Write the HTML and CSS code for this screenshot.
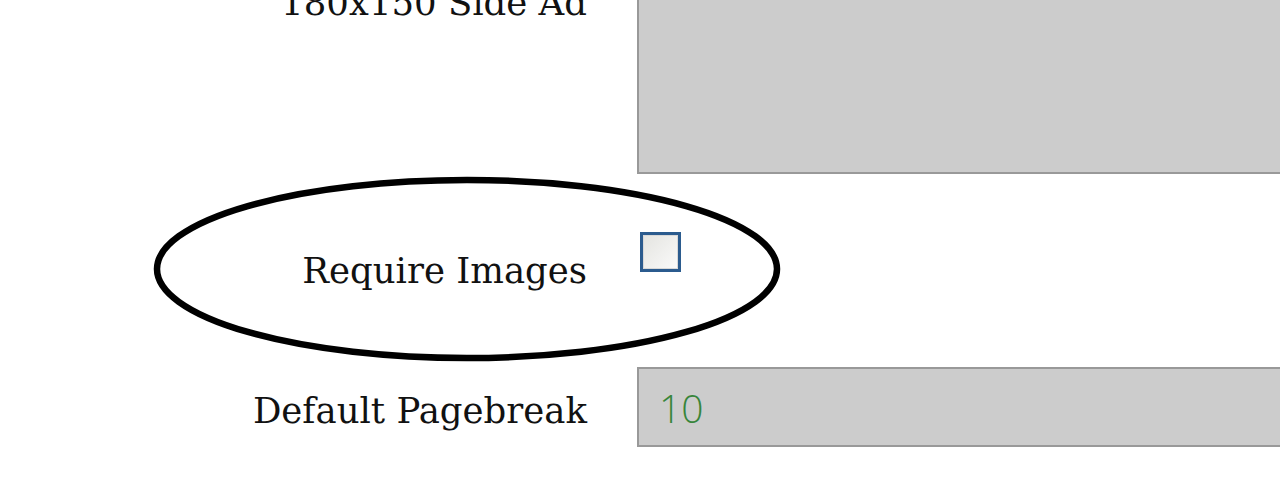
FILE: index.html
```html
<!DOCTYPE html>
<html lang="en">
<head>
  <meta charset="UTF-8">
  <title>Settings</title>
  <link rel="stylesheet" href="styles.css">
</head>
<body>
  <form class="settings">
    <div class="row row-ad">
      <label for="sideAd">180x150 Side Ad</label>
      <textarea id="sideAd" class="field field-tall"></textarea>
    </div>

    <div class="row row-check">
      <label for="reqImages">Require Images</label>
      <input type="checkbox" id="reqImages" class="check">
    </div>

    <div class="row row-page">
      <label for="pagebreak">Default Pagebreak</label>
      <input type="text" id="pagebreak" class="field field-text" value="10">
    </div>

    <!-- hand-drawn highlight around the checkbox row -->
    <svg class="circle-mark" width="640" height="200" viewBox="0 0 640 200">
      <ellipse cx="320" cy="100" rx="310" ry="89" fill="none" stroke="#000" stroke-width="6.5"/>
    </svg>
  </form>
</body>
</html>
```

FILE: styles.css
```css
body {
  margin: 0;
  background: #fff;
  font-family: "DejaVu Serif", serif;
  color: #111;
  overflow: hidden;
}

.settings {
  position: relative;
  margin-top: -17px;
}

.row {
  display: flex;
  align-items: flex-start;
  gap: 50px;
}

.row label {
  width: 587px;
  flex: none;
  text-align: right;
  font-size: 35.5px;
  line-height: 40px;
}

.field {
  box-sizing: border-box;
  width: 720px;
  flex: none;
  margin: 0;
  background: #cccccc;
  border: 2px solid #999;
  border-radius: 0;
  outline: none;
}

.field-tall {
  height: 191px;
  resize: none;
}

.row-check {
  margin-top: 58px;
}

.row-check label {
  padding-top: 19px;
}

.check {
  appearance: none;
  -webkit-appearance: none;
  box-sizing: border-box;
  width: 41px;
  height: 40px;
  margin: 0 0 0 3px;
  border: 3px solid #2b5b8e;
  box-shadow: inset 0 0 0 1px #d8d8d8;
  background: linear-gradient(135deg, #e4e4e0, #fafafa);
}

.row-page {
  margin-top: 76px;
}

.row-page label {
  padding-top: 24px;
}

.field-text {
  height: 80px;
  padding: 0 0 0 20px;
  font-family: "Open Sans", sans-serif;
  font-weight: 300;
  font-size: 39px;
  color: #37853a;
}

.circle-mark {
  position: absolute;
  left: 147px;
  top: 186px;
}
```
